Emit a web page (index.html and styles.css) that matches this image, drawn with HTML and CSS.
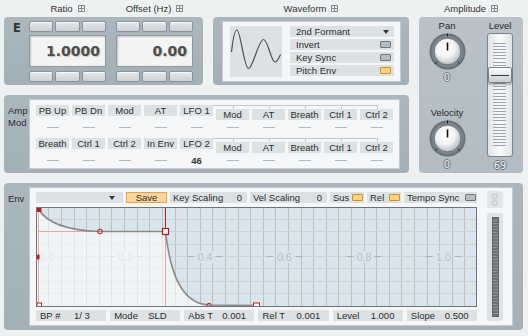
FILE: index.html
```html
<!DOCTYPE html>
<html lang="en">
<head>
    <meta charset="UTF-8">
    <meta name="viewport" content="width=device-width, initial-scale=1.0">
    <title>Formant Oscillator</title>
    <link rel="stylesheet" href="styles.css">
</head>
<body>
<div class="synth">
    <div class="head head-e">
        <span class="title">Ratio <svg class="plus" width="7" height="7"><rect x=".5" y=".5" width="6" height="6"/><path d="M3.5 1V6M1 3.5H6"/></svg></span>
        <span class="title">Offset (Hz) <svg class="plus" width="7" height="7"><rect x=".5" y=".5" width="6" height="6"/><path d="M3.5 1V6M1 3.5H6"/></svg></span>
    </div>
    <div class="head head-w">
        <span class="title">Waveform <svg class="plus" width="7" height="7"><rect x=".5" y=".5" width="6" height="6"/><path d="M3.5 1V6M1 3.5H6"/></svg></span>
    </div>
    <div class="head head-a">
        <span class="title">Amplitude <svg class="plus" width="7" height="7"><rect x=".5" y=".5" width="6" height="6"/><path d="M3.5 1V6M1 3.5H6"/></svg></span>
    </div>

    <!-- ratio / offset -->
    <div class="panel panel-e">
        <div class="side-label big">E</div>
        <div class="field">
            <div class="steps"><span class="step"></span><span class="step"></span><span class="step"></span></div>
            <div class="readout">1.0000</div>
            <div class="steps"><span class="step"></span><span class="step"></span><span class="step"></span></div>
        </div>
        <div class="field">
            <div class="steps"><span class="step"></span><span class="step"></span><span class="step"></span></div>
            <div class="readout">0.00</div>
            <div class="steps"><span class="step"></span><span class="step"></span><span class="step"></span></div>
        </div>
    </div>

    <!-- waveform -->
    <div class="panel panel-w">
        <div class="inset wave-inset">
            <div class="wave-view">
                <svg width="52" height="51" viewBox="0 0 52 51">
                    <path d="M1.5 26C3 12 5 4 7 4C10.5 4 14 42.5 18.5 42.5C23 42.5 28.5 13.5 33.5 13.5C38 13.5 41 36 45 36C47.5 36 49 31.5 50.5 28.5" fill="none" stroke="#505050" stroke-width="1.2"/>
                </svg>
            </div>
            <div class="wave-opts">
                <div class="opt">2nd Formant<span class="arrow"></span></div>
                <div class="opt">Invert<span class="led"></span></div>
                <div class="opt">Key Sync<span class="led"></span></div>
                <div class="opt">Pitch Env<span class="led on"></span></div>
            </div>
        </div>
    </div>

    <!-- amplitude -->
    <div class="panel panel-a">
        <div class="knobs">
            <div class="cap">Pan</div>
            <svg class="knob" width="37" height="37" viewBox="0 0 37 37">
                <defs>
                    <radialGradient id="ring" cx="50%" cy="50%" r="50%">
                        <stop offset="70%" stop-color="#8e989e"/>
                        <stop offset="100%" stop-color="#5f6970"/>
                    </radialGradient>
                    <radialGradient id="cap" cx="42%" cy="36%" r="65%">
                        <stop offset="0%" stop-color="#ffffff"/>
                        <stop offset="55%" stop-color="#f1f3f4"/>
                        <stop offset="100%" stop-color="#b7bdc1"/>
                    </radialGradient>
                </defs>
                <circle cx="18.5" cy="18.5" r="18" fill="url(#ring)"/>
                <circle cx="18.5" cy="18.5" r="13.3" fill="url(#cap)" stroke="#576168" stroke-width=".8"/>
                <path d="M18.5 9.5V17.5" stroke="#111" stroke-width="1.6"/>
                <path d="M18.5 .5V3.5M8.3 28.7L6.4 30.6M28.7 28.7L30.6 30.6" stroke="#1e1e1e" stroke-width="1"/>
            </svg>
            <div class="val">0</div>
            <div class="cap cap-vel">Velocity</div>
            <svg class="knob" width="37" height="37" viewBox="0 0 37 37">
                <circle cx="18.5" cy="18.5" r="18" fill="url(#ring)"/>
                <circle cx="18.5" cy="18.5" r="13.3" fill="url(#cap)" stroke="#576168" stroke-width=".8"/>
                <path d="M18.5 9.5V17.5" stroke="#111" stroke-width="1.6"/>
                <path d="M18.5 .5V3.5M8.3 28.7L6.4 30.6M28.7 28.7L30.6 30.6" stroke="#1e1e1e" stroke-width="1"/>
            </svg>
            <div class="val">0</div>
        </div>
        <div class="level">
            <div class="cap">Level</div>
            <div class="fader">
                <div class="ticks"></div>
                <div class="thumb" style="top: 33px"></div>
            </div>
            <div class="val">69</div>
        </div>
    </div>

    <!-- amp mod -->
    <div class="panel panel-mod">
        <div class="side-label">Amp<br>Mod</div>
        <div class="inset mod-inset">
            <div class="mod-grid">
                <div class="cell">PB Up</div><div class="cell">PB Dn</div><div class="cell">Mod</div><div class="cell">AT</div><div class="cell">LFO 1</div>
                <div class="amt"><span class="dash"></span></div><div class="amt"><span class="dash"></span></div><div class="amt"><span class="dash"></span></div><div class="amt"><span class="dash"></span></div><div class="amt"><span class="dash"></span></div>
                <div class="cell">Breath</div><div class="cell">Ctrl 1</div><div class="cell">Ctrl 2</div><div class="cell">In Env</div><div class="cell">LFO 2</div>
                <div class="amt"><span class="dash"></span></div><div class="amt"><span class="dash"></span></div><div class="amt"><span class="dash"></span></div><div class="amt"><span class="dash"></span></div><div class="amt"><span class="num">46</span></div>
            </div>
            <div class="mod-grid branch">
                <div class="cell">Mod</div><div class="cell">AT</div><div class="cell">Breath</div><div class="cell">Ctrl 1</div><div class="cell">Ctrl 2</div>
                <div class="amt"><span class="dash"></span></div><div class="amt"><span class="dash"></span></div><div class="amt"><span class="dash"></span></div><div class="amt"><span class="dash"></span></div><div class="amt"><span class="dash"></span></div>
                <div class="cell">Mod</div><div class="cell">AT</div><div class="cell">Breath</div><div class="cell">Ctrl 1</div><div class="cell">Ctrl 2</div>
                <div class="amt"><span class="dash"></span></div><div class="amt"><span class="dash"></span></div><div class="amt"><span class="dash"></span></div><div class="amt"><span class="dash"></span></div><div class="amt"><span class="dash"></span></div>
            </div>
        </div>
    </div>

    <!-- envelope -->
    <div class="panel panel-env">
        <div class="side-label">Env</div>
        <div class="inset env-inset">
            <div class="env-main">
                <div class="env-bar">
                    <div class="drop"><span class="arrow"></span></div>
                    <div class="save">Save</div>
                    <div class="kv"><span>Key Scaling</span><span>0</span></div>
                    <div class="kv"><span>Vel Scaling</span><span>0</span></div>
                    <div class="tog tog-sus">Sus<span class="led on"></span></div>
                    <div class="tog tog-rel">Rel<span class="led on"></span></div>
                    <div class="tog tog-sync">Tempo Sync<span class="led"></span></div>
                </div>
                <svg class="graph" width="441" height="100" viewBox="0 0 441 100">
                    <rect width="441" height="100" fill="#d8e5ec"/>
                    <path d="M12.5 1V99M25.5 1V99M38.5 1V99M50.5 1V99M63.5 1V99M75.5 1V99M88.5 1V99M101.5 1V99M113.5 1V99M126.5 1V99M139.5 1V99M151.5 1V99M164.5 1V99M176.5 1V99M189.5 1V99M202.5 1V99M214.5 1V99M227.5 1V99M239.5 1V99M252.5 1V99M265.5 1V99M277.5 1V99M290.5 1V99M302.5 1V99M315.5 1V99M328.5 1V99M340.5 1V99M353.5 1V99M365.5 1V99M378.5 1V99M391.5 1V99M403.5 1V99M416.5 1V99M428.5 1V99" stroke="#c1bebf"/>
                    <path d="M1 12.5H440M1 24.5H440M1 37.5H440M1 49.5H440M1 61.5H440M1 74.5H440M1 86.5H440" stroke="#c8d2d8"/>
                    <g fill="#d8e5ec">
                        <rect x="2" y="44" width="17" height="12"/>
                        <rect x="81" y="44" width="17" height="12"/>
                        <rect x="160" y="44" width="18" height="12"/>
                        <rect x="240" y="44" width="17" height="12"/>
                        <rect x="319" y="44" width="18" height="12"/>
                        <rect x="399" y="44" width="17" height="12"/>
                    </g>
                    <path d="M72 49.5H78M101 49.5H107M152 49.5H158M180 49.5H186M231 49.5H237M260 49.5H266M311 49.5H317M339 49.5H345M390 49.5H396M419 49.5H425" stroke="#a8b1b6"/>
                    <g class="axis" text-anchor="middle">
                        <text x="10.5" y="53.5">0.0</text>
                        <text x="89.5" y="53.5">0.2</text>
                        <text x="169" y="53.5">0.4</text>
                        <text x="248.5" y="53.5">0.6</text>
                        <text x="328" y="53.5">0.8</text>
                        <text x="407.5" y="53.5">1.0</text>
                    </g>
                    <path d="M1 1L2.5 2C10 15 30 23.5 64 24.5L129.5 24.5C133.5 60 143 97 173 98L221 98.5L221 99L1 99Z" fill="#ffffff" fill-opacity=".6"/>
                    <path d="M2.5 1V99M2.5 24.5H129.5M129.5 24.5V99" stroke="#f2a2a2"/>
                    <path d="M129.5 1V24.5" stroke="#d01818"/>
                    <path d="M2.5 2C10 15 30 23.5 64 24.5L129.5 24.5C133.5 60 143 97 173 98L221 98.5" fill="none" stroke="#8a8a8a" stroke-width="1.6"/>
                    <rect x="1" y="1" width="4.5" height="4" fill="#c81414"/>
                    <rect x="1" y="47.5" width="2.5" height="5" rx="1" fill="#c81414"/>
                    <circle cx="64" cy="24.5" r="2.4" fill="none" stroke="#c81414"/>
                    <rect x="126.5" y="21.5" width="6" height="6" fill="#fff" stroke="#c81414" stroke-width="1.2"/>
                    <rect x="1" y="96" width="4.5" height="5" fill="#fff" stroke="#c81414"/>
                    <circle cx="173" cy="98.5" r="2.2" fill="none" stroke="#c81414"/>
                    <rect x="217.5" y="96" width="6" height="6" fill="#fff" stroke="#c81414"/>
                    <rect x=".5" y=".5" width="440" height="99" fill="none" stroke="#6c7479"/>
                </svg>
                <div class="bp-bar">
                    <div class="bp"><span>BP #</span><span>1/ 3</span></div>
                    <div class="bp"><span>Mode</span><span>SLD</span></div>
                    <div class="bp"><span>Abs T</span><span>0.001</span></div>
                    <div class="bp"><span>Rel T</span><span>0.001</span></div>
                    <div class="bp"><span>Level</span><span>1.000</span></div>
                    <div class="bp"><span>Slope</span><span>0.500</span></div>
                </div>
            </div>
            <div class="env-side">
                <div class="link">
                    <svg width="16" height="17" viewBox="0 0 16 17"><circle cx="7.5" cy="5.5" r="2.4"/><circle cx="7.5" cy="12" r="2.4"/></svg>
                </div>
                <div class="meter"><div class="meter-strip"></div></div>
            </div>
        </div>
    </div>
</div>
</body>
</html>
```

FILE: styles.css
```css
body {
    margin: 0;
    width: 528px;
    height: 336px;
    overflow: hidden;
    background: #eef1f1;
    font-family: 'Liberation Sans', Arial, sans-serif;
    font-size: 9.5px;
    color: #2c2c2c;
}
.synth {
    display: grid;
    grid-template-columns: 199px 196px 104px;
    grid-template-rows: 17px 68px 10px 78px 10px 147px;
    column-gap: 10px;
    padding-left: 4px;
    grid-template-areas:
        "h1 h2 h3"
        "e w amp"
        ". . amp"
        "mod mod amp"
        ". . ."
        "env env env";
}

/* section headers */
.head {
    display: flex;
    align-items: center;
    justify-content: center;
    white-space: nowrap;
    color: #333;
}
.head-e {
    grid-area: h1;
    justify-content: flex-start;
    padding-left: 25px;
    gap: 10px;
}
.head-e .title {
    width: 77px;
    justify-content: center;
}
.head-w { grid-area: h2; }
.head-a { grid-area: h3; }
.title {
    display: flex;
    align-items: center;
    gap: 5px;
}
.plus {
    fill: none;
    stroke: #8a8a8a;
    stroke-width: 1;
}

/* panels */
.panel {
    background: linear-gradient(#abb7be, #a4b0b7);
    border-radius: 4px;
}
.inset {
    box-sizing: border-box;
    background: #f4f6f7;
    border: 1px solid #c3cbd0;
    border-radius: 1px;
}
.side-label {
    width: 25px;
    flex: none;
    box-sizing: border-box;
    padding: 6px 0 0 4px;
    line-height: 11.5px;
}
.side-label.big {
    font: bold 11.5px 'DejaVu Sans', sans-serif;
    line-height: 12px;
    padding: 1px 0 0 9px;
    color: #333;
}

/* ratio / offset */
.panel-e {
    grid-area: e;
    display: flex;
    padding-top: 4px;
}
.field {
    width: 77px;
    display: flex;
    flex-direction: column;
}
.field + .field {
    margin-left: 10px;
}
.steps {
    display: flex;
    gap: 2px;
    height: 11px;
}
.steps + .readout {
    margin-top: 3px;
}
.readout + .steps {
    margin-top: 4px;
}
.step {
    flex: 1;
    box-sizing: border-box;
    background: linear-gradient(#e6e9eb, #cbd1d4);
    border: 1px solid #89939a;
    border-radius: 2px;
    box-shadow: inset 0 1px 0 #f6f8f9;
}
.readout {
    box-sizing: border-box;
    height: 32px;
    border: 1px solid #8e989e;
    background: #f3f4f4;
    box-shadow: inset 1px 1px 2px rgba(0, 0, 0, 0.2);
    text-align: right;
    padding-right: 5px;
    font: bold 14px 'DejaVu Sans', sans-serif;
    line-height: 30px;
    color: #4d4d4d;
    text-shadow: 1px 1px 1px rgba(0, 0, 0, 0.2);
}

/* waveform */
.panel-w {
    grid-area: w;
    padding: 4px 8px 3px 9px;
}
.wave-inset {
    display: flex;
    height: 100%;
    padding: 4px 6px 0 7px;
    gap: 8px;
}
.wave-view {
    width: 52px;
    height: 51px;
    background: #dce1e4;
}
.wave-view svg {
    display: block;
}
.wave-opts {
    width: 104px;
    display: flex;
    flex-direction: column;
    gap: 2px;
}
.opt {
    height: 11px;
    line-height: 11px;
    background: #dce1e4;
    display: flex;
    align-items: center;
    justify-content: space-between;
    padding: 0 3px 0 6px;
}
.led {
    width: 11px;
    height: 7px;
    box-sizing: border-box;
    border: 1px solid #6d767c;
    background: #b5bdc2;
    border-radius: 1px;
}
.led.on {
    background: #ffd37e;
    border-color: #d4901c;
}
.arrow {
    width: 0;
    height: 0;
    border-left: 3.5px solid transparent;
    border-right: 3.5px solid transparent;
    border-top: 4px solid #333;
    margin-right: 2px;
}

/* amplitude */
.panel-a {
    grid-area: amp;
    display: flex;
    gap: 21px;
    padding: 3px 10px 0 9px;
    background: linear-gradient(#b8c2c8, #b2bcc3);
}
.knobs {
    width: 38px;
    display: flex;
    flex-direction: column;
    align-items: center;
}
.level {
    width: 26px;
    display: flex;
    flex-direction: column;
}
.cap {
    text-align: center;
    line-height: 12px;
    white-space: nowrap;
    color: #2a2a2a;
}
.knob {
    display: block;
    margin-top: 1px;
}
.cap-vel {
    margin-top: 23px;
}
.val {
    margin-top: 2px;
    font-family: 'DejaVu Sans', sans-serif;
    font-size: 10px;
    line-height: 12px;
    text-align: center;
    color: #eef1f3;
    text-shadow: 1px 0 0 #6b757b, -1px 0 0 #6b757b, 0 1px 0 #6b757b, 0 -1px 0 #6b757b;
}
.fader {
    position: relative;
    margin-top: 1px;
    height: 124px;
    box-sizing: border-box;
    border: 1px solid #7c868c;
    border-radius: 3px;
    background: linear-gradient(90deg, #dfe4e6, #fafbfb 50%, #dfe4e6);
}
.fader + .val {
    margin-top: 3px;
}
.ticks {
    margin: 9px 6px 0 5px;
    height: 104px;
    background: repeating-linear-gradient(to bottom, #9ea6ab 0 1px, transparent 1px 3.1px);
}
.thumb {
    position: absolute;
    left: 0;
    right: 0;
    height: 16px;
    box-sizing: border-box;
    border: 1px solid #79838a;
    border-radius: 2px;
    background:
        linear-gradient(#3a3a3a, #3a3a3a) no-repeat center / 18px 1px,
        linear-gradient(#fdfdfd, #e6e9eb 45%, #c7ccd0);
    box-shadow: 0 2px 2px rgba(0, 0, 0, 0.25);
}

/* amp mod */
.panel-mod {
    grid-area: mod;
    display: flex;
    padding: 4px 9px 4px 0;
}
.mod-inset {
    flex: 1;
    display: flex;
    gap: 3px;
    padding: 5px 0 0 6px;
}
.mod-grid {
    display: grid;
    grid-template-columns: repeat(5, 33px);
    grid-template-rows: 11px 22px 11px 20px;
    column-gap: 3px;
}
.mod-grid.branch {
    padding-top: 4px;
}
.cell {
    background: #dce1e4;
    text-align: center;
    line-height: 11px;
    white-space: nowrap;
}
.amt {
    display: flex;
    justify-content: center;
    align-items: flex-start;
}
.dash {
    width: 12px;
    height: 1px;
    margin-top: 11px;
    background: #b3b8bb;
}
.branch .dash {
    margin-top: 7px;
}
.num {
    margin-top: 6px;
    line-height: 11px;
    font-weight: bold;
    color: #333;
}
.branch .cell {
    position: relative;
}
.branch .cell::before {
    content: "";
    position: absolute;
    left: 50%;
    top: -4px;
    width: 1px;
    height: 4px;
    background: #c4cace;
}
.branch .cell::after {
    content: "";
    position: absolute;
    left: -3px;
    right: 0;
    top: -4px;
    height: 1px;
    background: #c4cace;
}
.branch .cell:nth-child(5)::after,
.branch .cell:nth-child(15)::after {
    right: 50%;
}

/* envelope */
.panel-env {
    grid-area: env;
    display: flex;
    padding: 4px 10px 4px 0;
}
.env-inset {
    flex: 1;
    display: flex;
    gap: 10px;
    padding: 4px 9px 0 6px;
}
.env-main {
    width: 441px;
    display: flex;
    flex-direction: column;
}
.env-bar {
    display: flex;
    gap: 3px;
    height: 11px;
    line-height: 11px;
}
.env-bar > div {
    background: #dce1e4;
    box-sizing: border-box;
    white-space: nowrap;
}
.drop {
    width: 87px;
    display: flex;
    justify-content: flex-end;
    align-items: center;
    padding-right: 6px;
}
.env-bar .save {
    width: 41px;
    background: #fdd69e;
    border: 1px solid #f0a23c;
    text-align: center;
    line-height: 9px;
}
.kv {
    width: 77px;
    display: flex;
    justify-content: space-between;
    padding: 0 5px 0 3px;
}
.tog {
    width: 34px;
    display: flex;
    align-items: center;
    justify-content: space-between;
    padding: 0 1px 0 3px;
}
.tog-sync {
    width: 73px;
}
.graph {
    display: block;
    margin-top: 4px;
}
.axis {
    font-family: 'Liberation Sans', Arial, sans-serif;
    font-size: 10.5px;
    fill: #b5bec3;
}
.bp-bar {
    margin-top: 3px;
    display: grid;
    grid-template-columns: repeat(6, 1fr);
    gap: 4px;
    height: 11px;
    line-height: 11px;
}
.bp {
    display: grid;
    grid-template-columns: 34px 1fr;
    padding-left: 4px;
    background: #dce1e4;
    white-space: nowrap;
}
.env-side {
    width: 16px;
    display: flex;
    flex-direction: column;
}
.link {
    height: 17px;
    margin-top: -1px;
    background: #e1e5e8;
    border-radius: 2px;
}
.link svg {
    display: block;
    fill: none;
    stroke: #c6ccd0;
    stroke-width: 1.4;
}
.meter {
    margin-top: 5px;
    height: 108px;
    box-sizing: border-box;
    padding: 4px 4px 0 5px;
    background: #dde2e5;
    border-radius: 2px;
}
.meter-strip {
    width: 7px;
    height: 100px;
    box-sizing: border-box;
    border: 1px solid #5f6569;
    background: repeating-linear-gradient(to bottom, #6c7276 0 2px, #8e9498 2px 3px);
}
```
